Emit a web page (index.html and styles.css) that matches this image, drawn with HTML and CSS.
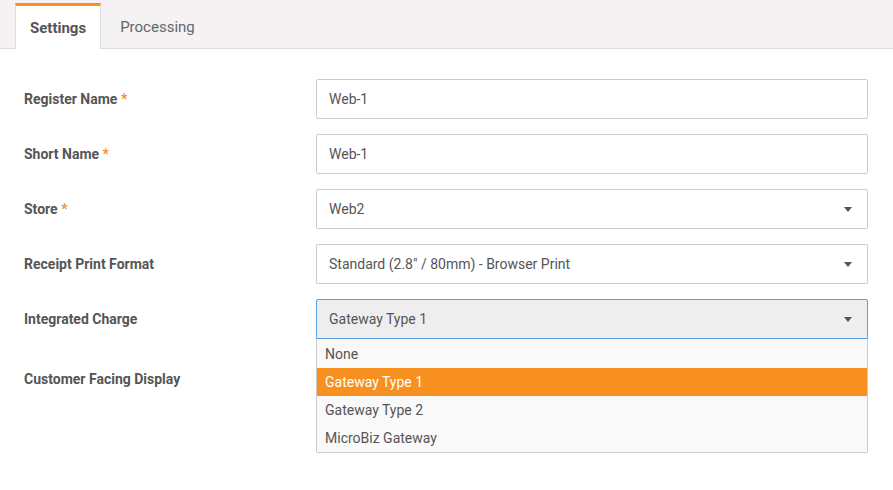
FILE: index.html
```html
<!DOCTYPE html>
<html lang="en">
<head>
    <meta charset="UTF-8">
    <meta name="viewport" content="width=device-width, initial-scale=1.0">
    <title>Register Settings</title>
    <link rel="stylesheet" href="styles.css">
</head>
<body>
    <div class="tabs">
        <div class="tab active">Settings</div>
        <div class="tab">Processing</div>
    </div>

    <div class="form">
        <div class="row">
            <label>Register Name <span class="req">*</span></label>
            <div class="field">Web-1</div>
        </div>
        <div class="row">
            <label>Short Name <span class="req">*</span></label>
            <div class="field">Web-1</div>
        </div>
        <div class="row">
            <label>Store <span class="req">*</span></label>
            <div class="field select">Web2<span class="arrow"></span></div>
        </div>
        <div class="row">
            <label>Receipt Print Format</label>
            <div class="field select">Standard (2.8" / 80mm) - Browser Print<span class="arrow"></span></div>
        </div>
        <div class="row">
            <label>Integrated Charge</label>
            <div class="field select open">Gateway Type 1<span class="arrow"></span>
                <ul class="options">
                    <li>None</li>
                    <li class="selected">Gateway Type 1</li>
                    <li>Gateway Type 2</li>
                    <li>MicroBiz Gateway</li>
                </ul>
            </div>
        </div>
        <div class="row">
            <label>Customer Facing Display</label>
            <div class="field select tall"></div>
        </div>
    </div>
</body>
</html>
```

FILE: styles.css
```css
body {
    margin: 0;
    min-height: 490px;
    font-family: Roboto, "Liberation Sans", Arial, sans-serif;
    color: #555;
    background: #fff;
}
.tabs {
    display: flex;
    height: 48px;
    padding-left: 15px;
    background-color: #f4f2f3;
    border-bottom: 1px solid #ddd;
}
.tab {
    margin-top: 3px;
    padding: 0 19px;
    line-height: 48px;
    font-size: 15px;
    color: #666;
}
.tab.active {
    padding: 0 14px;
    margin-bottom: -1px;
    line-height: 44px;
    font-weight: bold;
    color: #555;
    background-color: #fff;
    border-top: 3px solid #f7901e;
    border-left: 1px solid #ddd;
    border-right: 1px solid #ddd;
}
.form {
    padding: 30px 25px 40px 24px;
}
.row {
    display: flex;
    align-items: center;
    margin-bottom: 15px;
}
label {
    width: 292px;
    flex-shrink: 0;
    font-size: 14px;
    font-weight: bold;
    color: #555;
}
.req {
    color: #f7901e;
}
.field {
    position: relative;
    flex: 1;
    height: 38px;
    line-height: 38px;
    padding: 0 12px;
    font-size: 14px;
    color: #555;
    border: 1px solid #ccc;
    border-radius: 2px;
    background-color: #fff;
}
.field.tall {
    height: 48px;
}
.arrow {
    position: absolute;
    right: 15px;
    top: 17px;
    width: 0;
    height: 0;
    border-left: 4px solid transparent;
    border-right: 4px solid transparent;
    border-top: 5px solid #555;
}
.field.open {
    z-index: 5;
    background-color: #eee;
    border-color: #5b9dd9;
    border-radius: 2px 2px 0 0;
}
.options {
    position: absolute;
    z-index: 5;
    left: -1px;
    right: -1px;
    top: 39px;
    margin: 0;
    padding: 1px 0 0;
    list-style: none;
    background-color: #f9f9f9;
    border: 1px solid #ccc;
    border-top: none;
    border-radius: 0 0 2px 2px;
}
.options li {
    height: 28px;
    line-height: 28px;
    padding: 0 8px;
    font-size: 14px;
    color: #555;
}
.options li.selected {
    background-color: #f7901e;
    color: #fff;
}
```
